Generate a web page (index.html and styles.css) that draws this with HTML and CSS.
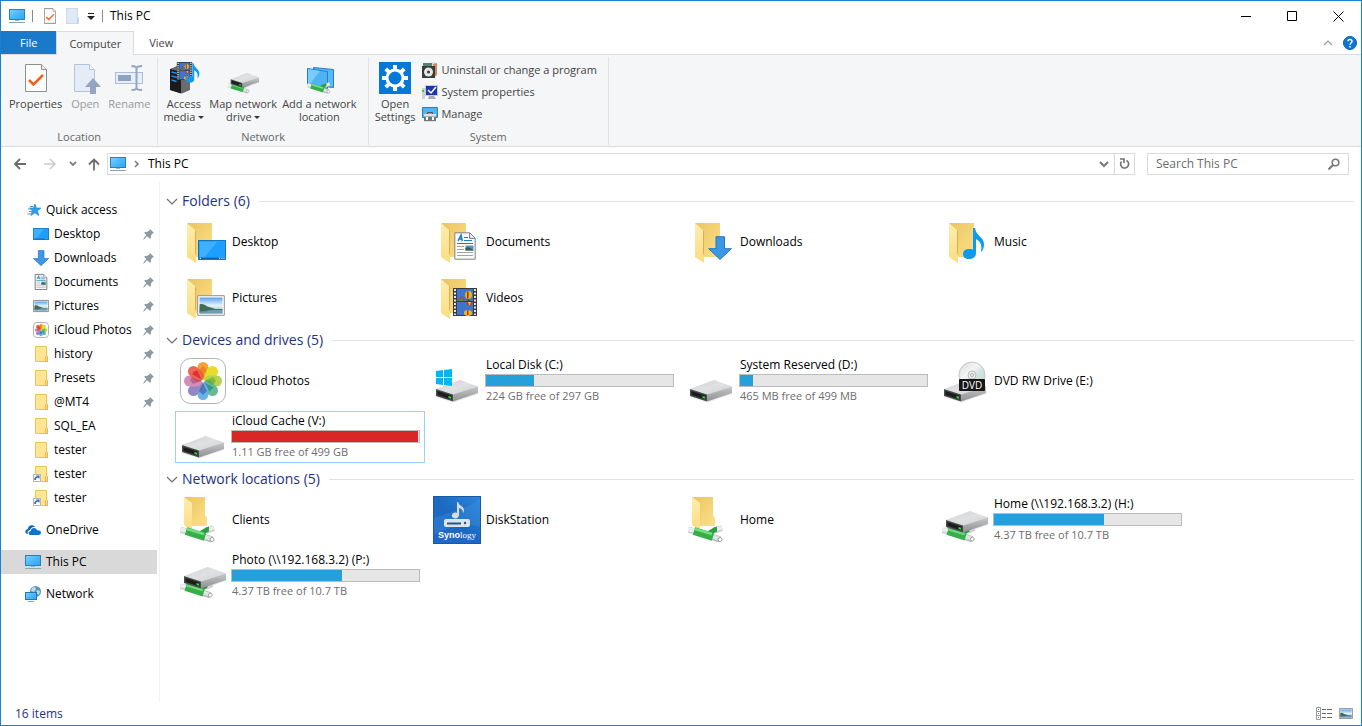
FILE: index.html
```html
<!DOCTYPE html>
<html lang="en">
<head>
    <meta charset="UTF-8">
    <meta name="viewport" content="width=device-width, initial-scale=1.0">
    <title>This PC</title>
    <link rel="stylesheet" href="styles.css">
</head>
<body>
    <!-- Shared icons -->
    <svg class="sprite" width="0" height="0" aria-hidden="true">
        <defs>
            <linearGradient id="g-screen" x1="0" y1="0" x2="1" y2="1">
                <stop offset="0" stop-color="#7fd0ff"/><stop offset=".5" stop-color="#4db8fc"/><stop offset="1" stop-color="#2ba6fb"/>
            </linearGradient>
            <linearGradient id="g-back" x1="0" y1="0" x2="1" y2="1">
                <stop offset="0" stop-color="#e9c55f"/><stop offset="1" stop-color="#ffe08a"/>
            </linearGradient>
            <linearGradient id="g-front" x1="0" y1="0" x2="0" y2="1">
                <stop offset="0" stop-color="#ffedb0"/><stop offset="1" stop-color="#fbdc80"/>
            </linearGradient>
            <linearGradient id="g-metal" x1="0" y1="0" x2="1" y2="1">
                <stop offset="0" stop-color="#cfcfd2"/><stop offset=".5" stop-color="#e0e1e3"/><stop offset="1" stop-color="#cfd0d2"/>
            </linearGradient>
            <linearGradient id="g-side" x1="0" y1="0" x2="0" y2="1">
                <stop offset="0" stop-color="#c6c7c9"/><stop offset="1" stop-color="#8f9092"/>
            </linearGradient>
            <linearGradient id="g-photo" x1="0" y1="0" x2="0" y2="1">
                <stop offset="0" stop-color="#5aa3ee"/><stop offset=".5" stop-color="#e4f3fb"/><stop offset="1" stop-color="#7fa9c4"/>
            </linearGradient>
            <linearGradient id="g-syn" x1="0" y1="1" x2="1" y2="0">
                <stop offset="0" stop-color="#1f68cc"/><stop offset=".5" stop-color="#1c69c0"/><stop offset="1" stop-color="#2a86dc"/>
            </linearGradient>
            <linearGradient id="g-disc" x1="0" y1="0" x2="1" y2="1">
                <stop offset="0" stop-color="#d9d9d9"/><stop offset=".4" stop-color="#f4f4f4"/><stop offset=".6" stop-color="#cfe6e2"/><stop offset="1" stop-color="#cfcfcf"/>
            </linearGradient>
        </defs>

        <symbol id="pc" viewBox="0 0 16 16">
            <rect x=".5" y="1.5" width="15" height="10" fill="url(#g-screen)" stroke="#2f7fb0"/>
            <path d="M6 12h4v1H6z" fill="#9fb4c4"/><path d="M0 14.5h16" stroke="#8aa5b8"/>
        </symbol>
        <symbol id="folder" viewBox="0 0 16 16">
            <path d="M2.5.5h11v10l1 1v4h-12z" fill="#ffe594" stroke="#e9c258"/>
            <path d="M12.5 15.5v-5l1-1 1 1v5z" fill="#ffe08a" stroke="#e2b546"/>
        </symbol>
        <symbol id="shortcut" viewBox="0 0 16 16">
            <use href="#folder"/>
            <rect x=".5" y="8.5" width="7" height="7" fill="#fff" stroke="#b4b8bc"/>
            <path d="M2 14c0-2 1-3 2.500-3" fill="none" stroke="#2a62b0" stroke-width="1.500"/><path d="M3 9.500h3.500V13z" fill="#2a62b0"/>
        </symbol>
        <symbol id="pin" viewBox="0 0 12 12">
            <path d="M7 1l4 4-1.500.6L8 7.500l-.2 2.500-1 .8-2.600-2.600L1 11.500l-.8-.2L.8 10l2.700-3L1.200 5l.8-1 2.600-.2L6.500 2.200z" fill="#8b99a5"/>
        </symbol>
        <symbol id="screen" viewBox="0 0 16 12" preserveAspectRatio="none">
            <rect x=".25" y=".25" width="15.500" height="11.500" fill="#1e9fff"/>
            <path d="M1 1h10L4 10H1z" fill="#3eb0ff"/>
            <path d="M.4 11h15.200" stroke="#0a63ad" stroke-width=".8"/><path d="M1 11h.7M12 11h.7M13.300 11h.7M14.500 11h.7" stroke="#fff" stroke-width=".6"/>
            <rect x=".25" y=".25" width="15.500" height="11.500" fill="none" stroke="#0f6db8" vector-effect="non-scaling-stroke"/>
        </symbol>
        <symbol id="down" viewBox="0 0 24 24">
            <path d="M8 .7h8.500v12h7L12 23.500.7 12.700H8z" fill="#3b97e8" stroke="#2b76bd"/>
        </symbol>
        <symbol id="document" viewBox="0 0 22 28">
            <path d="M.8.8h15l5.400 5.400v21H.8z" fill="#fafafa" stroke="#808080" vector-effect="non-scaling-stroke"/>
            <path d="M15.500 1v5.500H21" fill="#e4e4e4" stroke="#868686"/>
            <path d="M4 9l3-6 1.300 6M5 7h3" fill="none" stroke="#1583c4" stroke-width="1.500"/>
            <path d="M10 5.500h4M10 8.500h8M3 11.500h16" stroke="#1583c4" stroke-width="1.200"/>
            <path d="M3 14.500h7M3 17.500h7M3 20.500h16M3 23.500h16" stroke="#a4a4a4"/>
            <rect x="11.500" y="13.500" width="8" height="5" fill="#5a91c4"/><path d="M11.500 16l3-1 5 3v.5h-8z" fill="#35604e"/>
        </symbol>
        <symbol id="picture" viewBox="0 0 28 21">
            <rect x=".7" y=".7" width="26.600" height="19.600" fill="#fff" stroke="#909090" vector-effect="non-scaling-stroke"/>
            <rect x="2.500" y="2.500" width="23" height="16" fill="url(#g-photo)"/>
            <path d="M2.500 9.500c3-1 5 0 8 2l8 2.500h7v1l-13 .5-4 1.500-6 .5z" fill="#3f6d57"/>
            <path d="M2.500 16c7 1 10-2 23-1v3.500h-23z" fill="#6a93ad" opacity=".8"/>
        </symbol>
        <symbol id="flower" viewBox="0 0 48 48">
            <rect x="1.500" y="1.500" width="45" height="45" rx="10" fill="#fff" stroke="#b3b3b5" vector-effect="non-scaling-stroke"/>
            <g opacity=".88">
                <rect x="18.500" y="5" width="11" height="18" rx="5.500" fill="#f7931e"/>
                <rect x="18.500" y="5" width="11" height="18" rx="5.500" fill="#e4d80a" transform="rotate(45 24 24)"/>
                <rect x="18.500" y="5" width="11" height="18" rx="5.500" fill="#a8cf38" transform="rotate(90 24 24)"/>
                <rect x="18.500" y="5" width="11" height="18" rx="5.500" fill="#4fb286" transform="rotate(135 24 24)"/>
                <rect x="18.500" y="5" width="11" height="18" rx="5.500" fill="#5ba8e0" transform="rotate(180 24 24)"/>
                <rect x="18.500" y="5" width="11" height="18" rx="5.500" fill="#8677c0" transform="rotate(225 24 24)"/>
                <rect x="18.500" y="5" width="11" height="18" rx="5.500" fill="#cb7fae" transform="rotate(270 24 24)"/>
                <rect x="18.500" y="5" width="11" height="18" rx="5.500" fill="#f0503c" transform="rotate(315 24 24)"/>
            </g>
            <path d="M24 22l-4-9 4-4 4 4z" fill="#e65f12" opacity=".5"/><path d="M22 24l-9-4-2 3 3 4z" fill="#a33a6a" opacity=".5"/>
            <path d="M24 26l-4 8 4 4 4-4z" fill="#2463a8" opacity=".6"/><path d="M26 24l8-4 3 4-3 4z" fill="#5c9a20" opacity=".5"/>
            <path d="M22.500 22.500l-9-5 1-3 4-1z" fill="#d1201c" opacity=".7"/><path d="M25.500 25.500l9 5-4 4z" fill="#14806c" opacity=".6"/>
            <circle cx="24" cy="24" r="1.500" fill="#fff"/>
        </symbol>
        <symbol id="big-folder" viewBox="0 0 48 48">
            <path d="M8 5h25v34H15z" fill="url(#g-back)"/>
            <path d="M8 5l9 8v32l-9-6z" fill="url(#g-front)"/>
            <path d="M16 12l1 1v22l-1 3z" fill="#d9b250"/>
        </symbol>
        <symbol id="film" viewBox="0 0 24 28">
            <path d="M0 0h24v28H0z" fill="#3a3a3a"/>
            <path d="M4 1h16v12H4zM4 14h16v13H4z" fill="#3e74cc"/>
            <path d="M4 13l5-5 3 5z" fill="#c03b34"/><path d="M5 13l4-3 2 3z" fill="#3b9a3c"/>
            <ellipse cx="15.500" cy="7" rx="3.500" ry="4" fill="#e9b523"/><path d="M14 3.500h1.500v7H14z" fill="#a32a1c"/><path d="M14.500 11.500h2V13h-2z" fill="#5b3a12"/>
            <path d="M13 14h7l-3.500 5z" fill="#c8361f"/><path d="M15 14h3l-1.500 4z" fill="#f0c22d"/>
            <ellipse cx="15" cy="25" rx="4" ry="3" fill="#eab824"/><path d="M14 22h1.500v5H14z" fill="#c8361f"/>
            <path d="M2 1v26M22 1v26" stroke="#e6e6e6" stroke-width="2" stroke-dasharray="2 1.500"/>
        </symbol>
        <symbol id="note" viewBox="0 0 22 33">
            <path d="M10 1h2c1 8 9 9 9 16 0 4-1 6-3 8 1-7 0-10-5-13v14c0 4-3 6-7 6-4 0-6-2-6-5 0-4 4-6 10-4.500z" fill="#0d9bf2"/>
        </symbol>
        <symbol id="drive" viewBox="0 0 44 24">
            <path d="M3 19l16 4.500L43 15v-4L25 1 1 11v6z" fill="#000" opacity=".08"/>
            <path d="M1 10L25 1l18 6.500L18 15.500z" fill="url(#g-metal)"/>
            <path d="M18 15.500l25-8V14l-25 8.500z" fill="url(#g-side)"/>
            <path d="M1 10l17 5.500v7L1 17z" fill="#4a4b4c"/>
            <path d="M2.500 12l14 4.500v4L2.500 16z" fill="#1c1d1e"/>
            <path d="M13.500 17l2.500.8v2l-2.500-.8z" fill="#2fe02f"/>
        </symbol>
        <symbol id="cable" viewBox="0 0 38 18">
            <path d="M27 6l8-3" stroke="#c9ccce" stroke-width="6"/><path d="M27 5.500l8-3" stroke="#e9ebec" stroke-width="4"/>
            <path d="M1.500 5l8 1.500" stroke="#c9ccce" stroke-width="6"/><path d="M1.500 4.500l8 1.500" stroke="#eceeef" stroke-width="4"/>
            <path d="M25 12l8 2.500" stroke="#b5b9bc" stroke-width="6.500"/><path d="M25 11.500l8 2.500" stroke="#e1e4e6" stroke-width="4"/>
            <path d="M30 4c-4 0-6 6-13 5" fill="none" stroke="#2f9e3f" stroke-width="5"/>
            <path d="M7 6l19 6" fill="none" stroke="#35b048" stroke-width="8"/>
            <path d="M8 4l17 5" stroke="#74dc82" stroke-width="2.500"/>
            <circle cx="33" cy="14.500" r="2" fill="#fff" stroke="#989da0"/>
        </symbol>
        <symbol id="net-folder" viewBox="0 0 48 48">
            <path d="M5 1h21v18l2 3v8H11z" fill="url(#g-back)"/>
            <path d="M5 1l8 6v25l-2 2-6-5z" fill="url(#g-front)"/>
            <use href="#cable" x="0" y="29" width="38" height="18"/>
        </symbol>
        <symbol id="net-drive" viewBox="0 0 48 48">
            <use href="#cable" x="0" y="29" width="36" height="18"/>
            <use href="#drive" x="4" y="14" width="44" height="24"/>
        </symbol>
        <symbol id="plain-drive" viewBox="0 0 48 48">
            <use href="#drive" x="2" y="22" width="44" height="24"/>
        </symbol>
        <symbol id="page" viewBox="0 0 22 28">
            <path d="M.5.5h16l5 5v22H.5z" fill="#fdfdfd" stroke="#8f8f8f" vector-effect="non-scaling-stroke"/>
            <path d="M16.500.5v5h5" fill="#ececec" stroke="#8f8f8f"/>
            <path d="M4 16l4.500 4.500L18 11" fill="none" stroke="#f2601b" stroke-width="2.500"/>
        </symbol>
        <symbol id="chevron" viewBox="0 0 12 12">
            <path d="M1 4l5 5 5-5" fill="none" stroke="#6e6e6e" stroke-width="1.200"/>
        </symbol>
    </svg>

    <div class="window">
        <header class="titlebar">
            <svg class="icon16"><use href="#pc"/></svg>
            <span class="separator"></span>
            <button class="quick" aria-label="Properties"><svg width="12" height="16"><use href="#page"/></svg></button>
            <button class="quick" aria-label="New folder"><svg width="14" height="16" viewBox="0 0 14 16"><path d="M.5.500h11v8l1 1v6H.5z" fill="#dfe8f5" stroke="#ccd7e8"/><path d="M11.500 15V9.500" stroke="#c3cfe2"/></svg></button>
            <button class="quick" aria-label="Customize toolbar"><svg width="8" height="8" viewBox="0 0 8 8"><path d="M1 1.500h6" stroke="#222"/><path d="M0 4h8L4 8z" fill="#222"/></svg></button>
            <span class="separator"></span>
            <h1 class="title">This PC</h1>
            <div class="controls">
                <button class="control" aria-label="Minimize"><svg width="11" height="11"><path d="M0 5.500h10" stroke="#000"/></svg></button>
                <button class="control" aria-label="Maximize"><svg width="11" height="11"><path d="M.5.500h9v9h-9z" fill="none" stroke="#000"/></svg></button>
                <button class="control" aria-label="Close"><svg width="11" height="11"><path d="M.5.500l10 10M10.500.5l-10 10" stroke="#000"/></svg></button>
            </div>
        </header>

        <nav class="tabs">
            <button class="tab tab-file">File</button>
            <button class="tab tab-active">Computer</button>
            <button class="tab">View</button>
            <div class="tab-tools">
                <button aria-label="Collapse ribbon"><svg width="10" height="6"><path d="M1 5l4-4 4 4" fill="none" stroke="#999" stroke-width="1.200"/></svg></button>
                <button aria-label="Help"><svg width="14" height="14"><circle cx="7" cy="7" r="6.500" fill="#0b76d6" stroke="#0760b4"/><path d="M5 5.300c0-2.500 4-2.500 4 0C9 7 7 7 7 8.800M7 10v1.500" fill="none" stroke="#fff" stroke-width="1.500"/></svg></button>
            </div>
        </nav>

        <!-- Ribbon -->
        <div class="ribbon">
            <section class="ribbon-group">
                <div class="ribbon-items location">
                    <button class="ribbon-button">
                        <svg width="32" height="32" viewBox="0 0 32 32"><use href="#page" x="5" y="2" width="22" height="28"/></svg>
                        Properties
                    </button>
                    <button class="ribbon-button" disabled>
                        <svg width="32" height="32" viewBox="0 0 32 32"><path d="M5.500 2.500h15l5 5v22h-20z" fill="#e4ecf7" stroke="#b5c3da"/><path d="M20.500 2.500v5h5" fill="#f5f8fc" stroke="#b5c3da"/><path d="M24 16l8 9h-5v7h-6v-7h-5z" fill="#93a5c2"/></svg>
                        Open
                    </button>
                    <button class="ribbon-button" disabled>
                        <svg width="32" height="32" viewBox="0 0 32 32"><rect x="2.500" y="10.500" width="27" height="11" fill="#e7eef8" stroke="#aebdd6"/><rect x="5" y="13" width="13" height="6" fill="#8fa2c2"/><path d="M18.500 4c3 0 5 .5 5 2.500v19c0 2-2 2.500-5 2.500M29 4c-3 0-5.500.5-5.500 2.500v19c0 2 2.500 2.500 5.500 2.500" fill="none" stroke="#93a5c2" stroke-width="2"/></svg>
                        Rename
                    </button>
                </div>
                <h2 class="ribbon-label">Location</h2>
            </section>

            <section class="ribbon-group">
                <div class="ribbon-items network">
                    <button class="ribbon-button">
                        <svg width="32" height="32" viewBox="0 0 32 32"><path d="M2 7l7-3 13 3v21l-8 3.500L2 28z" fill="#6b6b6b"/><path d="M2 7l11 3v21.500L2 28z" fill="#1b1b1d"/><path d="M3.500 10l8 2M3.500 14l8 2M3.500 18l5 1.500" stroke="#2a86e8" stroke-width="1.500"/><use href="#film" x="8" y="0" width="17" height="18"/><use href="#note" x="18" y="0" width="14" height="22"/></svg>
                        Access<br>media <i class="caret"></i>
                    </button>
                    <button class="ribbon-button">
                        <svg width="32" height="32" viewBox="0 0 32 32"><use href="#cable" x="0" y="20" width="24" height="12"/><use href="#drive" x="3" y="10" width="30" height="17"/></svg>
                        Map network<br>drive <i class="caret"></i>
                    </button>
                    <button class="ribbon-button">
                        <svg width="32" height="32" viewBox="0 0 32 32"><path d="M10.500 5.500l20 2v18l-20-2z" fill="#59b9f7" stroke="#2381bd"/><path d="M4.500 6.500l20 3v17l-20-4z" fill="#4db2f6" stroke="#2381bd"/><path d="M5 7l12 2L7 22l-2-.5z" fill="#7bcbff"/><use href="#cable" x="3" y="20" width="26" height="12"/></svg>
                        Add a network<br>location
                    </button>
                </div>
                <h2 class="ribbon-label">Network</h2>
            </section>

            <section class="ribbon-group">
                <div class="ribbon-items system">
                    <button class="ribbon-button">
                        <svg width="32" height="32" viewBox="0 0 32 32"><path d="M0 0h32v32H0z" fill="#0678d7"/><circle cx="16" cy="16" r="8" fill="none" stroke="#fff" stroke-width="3"/><path d="M16 3v5M16 24v5M3 16h5M24 16h5M6.800 6.800l3.500 3.500M21.700 21.700l3.500 3.500M25.200 6.800l-3.500 3.500M10.300 21.700l-3.500 3.500" stroke="#fff" stroke-width="4"/></svg>
                        Open<br>Settings
                    </button>
                    <div class="small-items">
                        <button class="small-button"><svg class="icon16" viewBox="0 0 16 16"><path d="M3 2l9-2 3 3v10l-3 2H3z" fill="#d8d8d4"/><path d="M11 2l4-1v12l-3 2z" fill="#ce8a5b"/><path d="M0 4h13v12H0z" fill="#393b3c"/><circle cx="6.500" cy="10" r="4.500" fill="#e6e6e6"/><circle cx="6.500" cy="10" r="1.500" fill="#393b3c"/><path d="M1 1h9v3H1z" fill="#56836f"/></svg>Uninstall or change a program</button>
                        <button class="small-button"><svg class="icon16" viewBox="0 0 16 16"><path d="M0 4h3v11H0z" fill="#d0d0d0"/><path d="M1 6v2" stroke="#2cb52c" stroke-width="1.500"/><path d="M3 1h13v11H3z" fill="#c9cbd0"/><path d="M4 2h11v9H4z" fill="#1f35b5"/><path d="M6 6l3 3 5-6" fill="none" stroke="#fff" stroke-width="1.500"/><path d="M7 12h5l2 3H6z" fill="#a9acb1"/></svg>System properties</button>
                        <button class="small-button"><svg class="icon16" viewBox="0 0 16 16"><path d="M.5 1.500h15v10H.5z" fill="#4eb5f5" stroke="#2f7fb0"/><path d="M5.500 8V6.500h5V8" fill="none" stroke="#555"/><path d="M2 8h12v8H2z" fill="#dfe1e4"/><path d="M2 10.500h12V15H2z" fill="#71767b"/><path d="M4 11h2v3H4zM10 11h2v3h-2z" fill="#fff"/></svg>Manage</button>
                    </div>
                </div>
                <h2 class="ribbon-label">System</h2>
            </section>
        </div>

        <!-- Address bar -->
        <div class="navigation">
            <button class="nav-button" aria-label="Back"><svg width="14" height="12"><path d="M7 1L2 6l5 5M2 6h11" fill="none" stroke="#6c6c6c" stroke-width="1.800"/></svg></button>
            <button class="nav-button" aria-label="Forward" disabled><svg width="14" height="12"><path d="M7 1l5 5-5 5M12 6H1" fill="none" stroke="#ccc" stroke-width="1.500"/></svg></button>
            <button class="nav-button narrow" aria-label="Recent locations"><svg width="8" height="6"><path d="M1 1l3 3 3-3" fill="none" stroke="#808080" stroke-width="1.800"/></svg></button>
            <button class="nav-button narrow" aria-label="Up"><svg width="12" height="13"><path d="M1 6.500l5-5 5 5M6 2v10.500" fill="none" stroke="#6c6c6c" stroke-width="1.800"/></svg></button>
            <div class="address">
                <svg class="icon16"><use href="#pc"/></svg>
                <svg width="6" height="8"><path d="M1 1l3 3-3 3" fill="none" stroke="#777" stroke-width="1.500"/></svg>
                <a class="crumb" href="#">This PC</a>
                <button class="address-button" aria-label="Previous locations"><svg width="10" height="7"><path d="M1 1l4 4 4-4" fill="none" stroke="#777" stroke-width="2"/></svg></button>
                <button class="address-button refresh" aria-label="Refresh"><svg width="11" height="12"><path d="M7.500 2.500a4 4 0 1 1-5 1M1 1h4v4" fill="none" stroke="#707070" stroke-width="1.600"/></svg></button>
            </div>
            <form class="search">
                <input type="search" placeholder="Search This PC" aria-label="Search This PC">
                <button aria-label="Search"><svg width="12" height="12"><circle cx="7.500" cy="4.500" r="3.300" fill="none" stroke="#777" stroke-width="1.600"/><path d="M5 7l-4.500 4.500" stroke="#777" stroke-width="2"/></svg></button>
            </form>
        </div>

        <div class="main">
            <!-- Navigation pane -->
            <nav class="sidebar">
                <div class="side-group">
                    <a class="side-item" href="#"><svg class="icon16" viewBox="0 0 16 16"><path d="M10 2l1.400 4H16l-3.500 2.700 1.300 4.800-4-2.700-3.800 2.700 1.300-4.800L4.500 6h4z" fill="#2e9fe6" stroke="#1583c9" stroke-width=".6"/><path d="M5 4.500h3M3 7h4M4 9.500h3M2.500 12h3.500" stroke="#2e9fe6"/></svg>Quick access</a>
                    <a class="side-item child" href="#"><svg class="icon16" viewBox="0 0 16 16"><use href="#screen" y="2" width="16" height="12"/></svg>Desktop<svg class="pin"><use href="#pin"/></svg></a>
                    <a class="side-item child" href="#"><svg class="icon16"><use href="#down"/></svg>Downloads<svg class="pin"><use href="#pin"/></svg></a>
                    <a class="side-item child" href="#"><svg class="icon16"><use href="#document"/></svg>Documents<svg class="pin"><use href="#pin"/></svg></a>
                    <a class="side-item child" href="#"><svg class="icon16"><use href="#picture"/></svg>Pictures<svg class="pin"><use href="#pin"/></svg></a>
                    <a class="side-item child" href="#"><svg class="icon16"><use href="#flower"/></svg>iCloud Photos<svg class="pin"><use href="#pin"/></svg></a>
                    <a class="side-item child" href="#"><svg class="icon16"><use href="#folder"/></svg>history<svg class="pin"><use href="#pin"/></svg></a>
                    <a class="side-item child" href="#"><svg class="icon16"><use href="#folder"/></svg>Presets<svg class="pin"><use href="#pin"/></svg></a>
                    <a class="side-item child" href="#"><svg class="icon16"><use href="#folder"/></svg>@MT4<svg class="pin"><use href="#pin"/></svg></a>
                    <a class="side-item child" href="#"><svg class="icon16"><use href="#folder"/></svg>SQL_EA</a>
                    <a class="side-item child" href="#"><svg class="icon16"><use href="#folder"/></svg>tester</a>
                    <a class="side-item child" href="#"><svg class="icon16"><use href="#shortcut"/></svg>tester</a>
                    <a class="side-item child" href="#"><svg class="icon16"><use href="#shortcut"/></svg>tester</a>
                </div>
                <a class="side-item" href="#"><svg class="icon16" viewBox="0 0 16 16"><path d="M3 12C-1 12 0 7 3 7c0-4 5-5 7-2-3-.5-4.500 1-5 3-2 0-3 2-2 4z" fill="#0a63b8"/><path d="M5.500 13c-2.500 0-2.500-4 .3-4 0-4 5.500-4 6.200-.8 3-.2 4 1 4 2.300 0 1.500-1 2.500-2.500 2.500z" fill="#0a73d0"/></svg>OneDrive</a>
                <a class="side-item selected" href="#"><svg class="icon16"><use href="#pc"/></svg>This PC</a>
                <a class="side-item" href="#"><svg class="icon16" viewBox="0 0 16 16"><circle cx="10.500" cy="5.500" r="5.500" fill="#5d93ae"/><path d="M7 2c2-2 4-1 4 1L9 6 6 5zM12 4l3 1-1 4-3-2z" fill="#b9dce6"/><rect x=".5" y="6.500" width="11" height="7" fill="url(#g-screen)" stroke="#2277aa"/><path d="M3 15.500h6" stroke="#8aa5b8"/></svg>Network</a>
            </nav>

            <main class="content">
                <section class="group">
                    <h2 class="group-title"><svg class="chevron"><use href="#chevron"/></svg>Folders (6)</h2>
                    <div class="tiles">
                        <a class="tile" href="#">
                            <svg class="icon48" viewBox="0 0 48 48"><use href="#big-folder"/><use href="#screen" x="19" y="22" width="28" height="20"/></svg>
                            <span class="name">Desktop</span>
                        </a>
                        <a class="tile" href="#">
                            <svg class="icon48" viewBox="0 0 48 48"><use href="#big-folder"/><use href="#document" x="21" y="14" width="22" height="28"/></svg>
                            <span class="name">Documents</span>
                        </a>
                        <a class="tile" href="#">
                            <svg class="icon48" viewBox="0 0 48 48"><use href="#big-folder"/><use href="#down" x="21" y="18" width="24" height="24"/></svg>
                            <span class="name">Downloads</span>
                        </a>
                        <a class="tile" href="#">
                            <svg class="icon48" viewBox="0 0 48 48"><use href="#big-folder"/><use href="#note" x="22" y="9" width="22" height="33"/></svg>
                            <span class="name">Music</span>
                        </a>
                        <a class="tile" href="#">
                            <svg class="icon48" viewBox="0 0 48 48"><use href="#big-folder"/><use href="#picture" x="18" y="21" width="28" height="21"/></svg>
                            <span class="name">Pictures</span>
                        </a>
                        <a class="tile" href="#">
                            <svg class="icon48" viewBox="0 0 48 48"><use href="#big-folder"/><use href="#film" x="20" y="14" width="24" height="28"/></svg>
                            <span class="name">Videos</span>
                        </a>
                    </div>
                </section>

                <section class="group">
                    <h2 class="group-title"><svg class="chevron"><use href="#chevron"/></svg>Devices and drives (5)</h2>
                    <div class="tiles">
                        <a class="tile" href="#">
                            <svg class="icon48"><use href="#flower"/></svg>
                            <span class="name">iCloud Photos</span>
                        </a>
                        <a class="tile" href="#">
                            <svg class="icon48" viewBox="0 0 48 48"><use href="#plain-drive"/><path d="M3 14l7-1v7H3zM11 13l8-1v8h-8zM3 21h7v7l-7-1zM11 21h8v8l-8-1z" fill="#00b7f1"/></svg>
                            <span class="drive">
                                <span class="name">Local Disk (C:)</span>
                                <span class="bar"><span class="fill" style="width: 25.5%"></span></span>
                                <span class="free">224 GB free of 297 GB</span>
                            </span>
                        </a>
                        <a class="tile" href="#">
                            <svg class="icon48"><use href="#plain-drive"/></svg>
                            <span class="drive">
                                <span class="name">System Reserved (D:)</span>
                                <span class="bar"><span class="fill" style="width: 7%"></span></span>
                                <span class="free">465 MB free of 499 MB</span>
                            </span>
                        </a>
                        <a class="tile" href="#">
                            <svg class="icon48" viewBox="0 0 48 48"><use href="#plain-drive"/><circle cx="31" cy="18" r="13" fill="url(#g-disc)" stroke="#c6c6c6"/><circle cx="31" cy="18" r="4" fill="#eee" stroke="#bbb"/><circle cx="31" cy="18" r="1.500" fill="#fff" stroke="#aaa"/><rect x="18" y="22" width="26" height="12" rx="1" fill="#161616"/><text x="31" y="32" class="disc-text">DVD</text></svg>
                            <span class="name">DVD RW Drive (E:)</span>
                        </a>
                        <a class="tile focused" href="#">
                            <svg class="icon48"><use href="#plain-drive"/></svg>
                            <span class="drive">
                                <span class="name">iCloud Cache (V:)</span>
                                <span class="bar"><span class="fill full" style="width: 99.5%"></span></span>
                                <span class="free">1.11 GB free of 499 GB</span>
                            </span>
                        </a>
                    </div>
                </section>

                <section class="group">
                    <h2 class="group-title"><svg class="chevron"><use href="#chevron"/></svg>Network locations (5)</h2>
                    <div class="tiles">
                        <a class="tile" href="#">
                            <svg class="icon48"><use href="#net-folder"/></svg>
                            <span class="name">Clients</span>
                        </a>
                        <a class="tile" href="#">
                            <svg class="icon48" viewBox="0 0 48 48"><rect x=".5" y=".5" width="47" height="47" fill="url(#g-syn)" stroke="#1b58a4"/><path d="M1 22C15 16 33 14 47 3v28C34 26 14 32 1 38z" fill="#4c9be6" opacity=".25"/><path d="M25 6c1 4 6 4 6 8 0 2-1 3-1 3 0-3-1-4-4-5v7c0 5-8 4-7 0 0-2 3-3 5-2V6z" fill="#d6dce2"/><rect x="11" y="23" width="26" height="8" rx="2" fill="#e0e4e8"/><path d="M14 27.500h14" stroke="#25588f" stroke-width="2"/><circle cx="32" cy="27" r="1.200" fill="#25588f"/><text x="24" y="42" class="brand-text"><tspan class="brand-bold">Syno</tspan>logy</text></svg>
                            <span class="name">DiskStation</span>
                        </a>
                        <a class="tile" href="#">
                            <svg class="icon48"><use href="#net-folder"/></svg>
                            <span class="name">Home</span>
                        </a>
                        <a class="tile" href="#">
                            <svg class="icon48"><use href="#net-drive"/></svg>
                            <span class="drive">
                                <span class="name">Home (\\192.168.3.2) (H:)</span>
                                <span class="bar"><span class="fill" style="width: 59%"></span></span>
                                <span class="free">4.37 TB free of 10.7 TB</span>
                            </span>
                        </a>
                        <a class="tile" href="#">
                            <svg class="icon48"><use href="#net-drive"/></svg>
                            <span class="drive">
                                <span class="name">Photo (\\192.168.3.2) (P:)</span>
                                <span class="bar"><span class="fill" style="width: 59%"></span></span>
                                <span class="free">4.37 TB free of 10.7 TB</span>
                            </span>
                        </a>
                    </div>
                </section>
            </main>
        </div>

        <footer class="statusbar">
            <span>16 items</span>
            <div class="view-buttons">
                <button aria-label="Details view"><svg width="16" height="13" viewBox="0 0 16 13"><path d="M.5.500h4v12h-4zM.5 4.500h4M.5 8.500h4" fill="#fff" stroke="#9a9a9a"/><path d="M2 2.500h1M2 6.500h1" stroke="#2b8de0"/><path d="M2 10.500h1" stroke="#d33"/><path d="M6 2.500h4M6 6.500h4M6 10.500h4M11 2.500h5M11 6.500h5M11 10.500h5" stroke="#666"/></svg></button>
                <button aria-label="Large icons view"><svg width="14" height="11"><use href="#picture"/></svg></button>
            </div>
        </footer>
    </div>
</body>
</html>
```
FILE: styles.css
```css
* {
    box-sizing: border-box;
}

body {
    margin: 0;
    font-family: "Open Sans", "Noto Sans", sans-serif;
    font-size: 12px;
    line-height: 16px;
    color: #000;
    background: #fff;
}

button {
    font: inherit;
    color: inherit;
    background: none;
    border: 0;
    padding: 0;
}

a {
    color: inherit;
    text-decoration: none;
}

h1, h2 {
    margin: 0;
    font-size: inherit;
    font-weight: normal;
}

svg {
    display: block;
    flex: none;
}

.sprite {
    position: absolute;
}

.icon16 {
    width: 16px;
    height: 16px;
}

.icon48 {
    width: 48px;
    height: 48px;
}

.window {
    display: flex;
    flex-direction: column;
    min-height: 100vh;
    border: 1px solid #1a80d4;
}

/* Title bar */
.titlebar {
    display: flex;
    align-items: center;
    height: 30px;
    padding-left: 8px;
}

.separator {
    width: 1px;
    height: 12px;
    margin: 0 7px;
    background: #888;
}

.quick {
    margin-right: 7px;
}

.quick:first-of-type {
    margin: 0 10px 0 4px;
}

.quick:last-of-type {
    margin: 0;
}

.controls {
    display: flex;
    align-self: stretch;
    margin-left: auto;
}

.control {
    display: flex;
    align-items: center;
    justify-content: center;
    width: 46px;
}

.control:hover {
    background: #e5e5e5;
}

/* Ribbon tabs */
.tabs {
    display: flex;
    height: 24px;
    border-bottom: 1px solid #dadbdc;
    font-size: 11px;
    color: #444;
}

.tab {
    padding: 0 15px;
}

.tab-file {
    padding: 0 19px;
    color: #fff;
    background: #1979ca;
}

.tab-active {
    height: 24px;
    padding: 0 12px;
    border: 1px solid #dadbdc;
    border-bottom: 0;
    background: #f5f6f7;
}

.tab-tools {
    display: flex;
    align-items: center;
    gap: 10px;
    margin-left: auto;
    padding-right: 4px;
}

.ribbon {
    display: flex;
    height: 92px;
    padding: 2px 0 1px;
    border-bottom: 1px solid #dadbdc;
    background: #f5f6f7;
    font-size: 11px;
    color: #444;
}

.ribbon-group {
    display: flex;
    flex-direction: column;
    justify-content: space-between;
    border-right: 1px solid #e2e3e4;
}

.ribbon-items {
    display: flex;
    align-items: flex-start;
    gap: 5px;
    padding: 5px 11px 0 5px;
}

.location {
    gap: 7px;
    padding: 5px 7px 0 8px;
}

.system {
    gap: 7px;
    padding-left: 6px;
}

.ribbon-button {
    line-height: 13px;
    color: #444;
    text-align: center;
}

.ribbon-button svg {
    margin: 0 auto 3px;
}

.ribbon-button:disabled {
    color: #999;
}

.caret {
    display: inline-block;
    vertical-align: 2px;
    border: 3px solid transparent;
    border-top-color: #333;
    border-bottom: 0;
}

.small-items {
    display: flex;
    flex-direction: column;
}

.small-button {
    display: flex;
    align-items: center;
    gap: 3px;
    height: 22px;
    padding-bottom: 6px;
}

.ribbon-label {
    color: #666;
    text-align: center;
}

/* Address bar */
.navigation {
    display: flex;
    align-items: center;
    height: 34px;
    padding: 0 12px;
}

.nav-button {
    width: 14px;
    margin-right: 16px;
}

.nav-button.narrow {
    width: auto;
    margin-right: 7px;
}

.nav-button.narrow + .nav-button.narrow {
    margin-left: 4px;
}

.nav-button:disabled {
    margin-right: 12px;
}

.address {
    display: flex;
    flex: 1;
    align-items: center;
    height: 22px;
    padding-left: 2px;
    border: 1px solid #d9d9d9;
}

.address > svg {
    margin-right: 8px;
}

.crumb {
    flex: 1;
}

.address-button {
    display: flex;
    align-items: center;
    justify-content: center;
    align-self: stretch;
    width: 20px;
}

.refresh {
    border-left: 1px solid #d9d9d9;
}

.search {
    display: flex;
    align-items: center;
    width: 202px;
    height: 22px;
    margin-left: 12px;
    padding: 0 8px;
    border: 1px solid #d9d9d9;
}

.search input {
    flex: 1;
    min-width: 0;
    padding: 0;
    border: 0;
    outline: 0;
    font: inherit;
}

.search input::placeholder {
    color: #6d6d6d;
}

/* Navigation pane */
.main {
    display: flex;
    flex: 1;
}

.sidebar {
    display: flex;
    flex-direction: column;
    gap: 8px;
    width: 159px;
    padding: 17px 2px 0 0;
    border-right: 1px solid #f2f2f2;
}

.side-item {
    display: flex;
    align-items: center;
    gap: 5px;
    height: 24px;
    padding: 0 2px 0 24px;
}

.side-item:hover {
    background: #e5f3ff;
}

.child {
    padding-left: 32px;
}

.side-item.selected {
    background: #d9d9d9;
}

.pin {
    width: 12px;
    height: 12px;
    margin-left: auto;
}

/* File list */
.content {
    flex: 1;
    padding: 6px 7px 0 6px;
}

.group {
    margin-bottom: 2px;
}

.group-title {
    display: flex;
    align-items: center;
    gap: 4px;
    height: 28px;
    margin-bottom: 1px;
    font-size: 14px;
    color: #1e3287;
}

.group-title::after {
    content: "";
    flex: 1;
    height: 1px;
    margin-left: 5px;
    background: #e2e2e2;
}

.chevron {
    width: 12px;
    height: 12px;
}

.tiles {
    display: grid;
    grid-template-columns: repeat(auto-fill, 250px);
    gap: 4px;
    padding-left: 9px;
}

.tile {
    display: flex;
    align-items: center;
    gap: 4px;
    height: 52px;
    padding: 0 4px 0 3px;
    border: 1px solid transparent;
}

.tile:hover {
    background: #e5f3ff;
}

.tile.focused {
    border-color: #99d1ff;
}

.drive {
    flex: 1;
}

.name, .free {
    display: block;
    padding-left: 1px;
}

.free {
    margin-bottom: 1px;
    font-size: 11px;
    color: #6d6d6d;
}

.bar {
    display: block;
    height: 13px;
    margin: 1px 0;
    border: 1px solid #bcbcbc;
    background: #e6e6e6;
}

.fill {
    display: block;
    height: 11px;
    background: #26a0da;
}

.fill.full {
    background: #da2626;
}

.disc-text {
    font-size: 10px;
    fill: #fff;
    text-anchor: middle;
}

.brand-text {
    font-family: "Liberation Serif", serif;
    font-size: 9px;
    fill: #fff;
    text-anchor: middle;
}

.brand-bold {
    font-family: "Liberation Sans", sans-serif;
    font-weight: bold;
}

/* Status bar */
.statusbar {
    display: flex;
    align-items: center;
    justify-content: space-between;
    height: 23px;
    padding: 0 8px 0 14px;
    color: #1e3287;
}

.view-buttons {
    display: flex;
    align-items: center;
    gap: 7px;
}
```
